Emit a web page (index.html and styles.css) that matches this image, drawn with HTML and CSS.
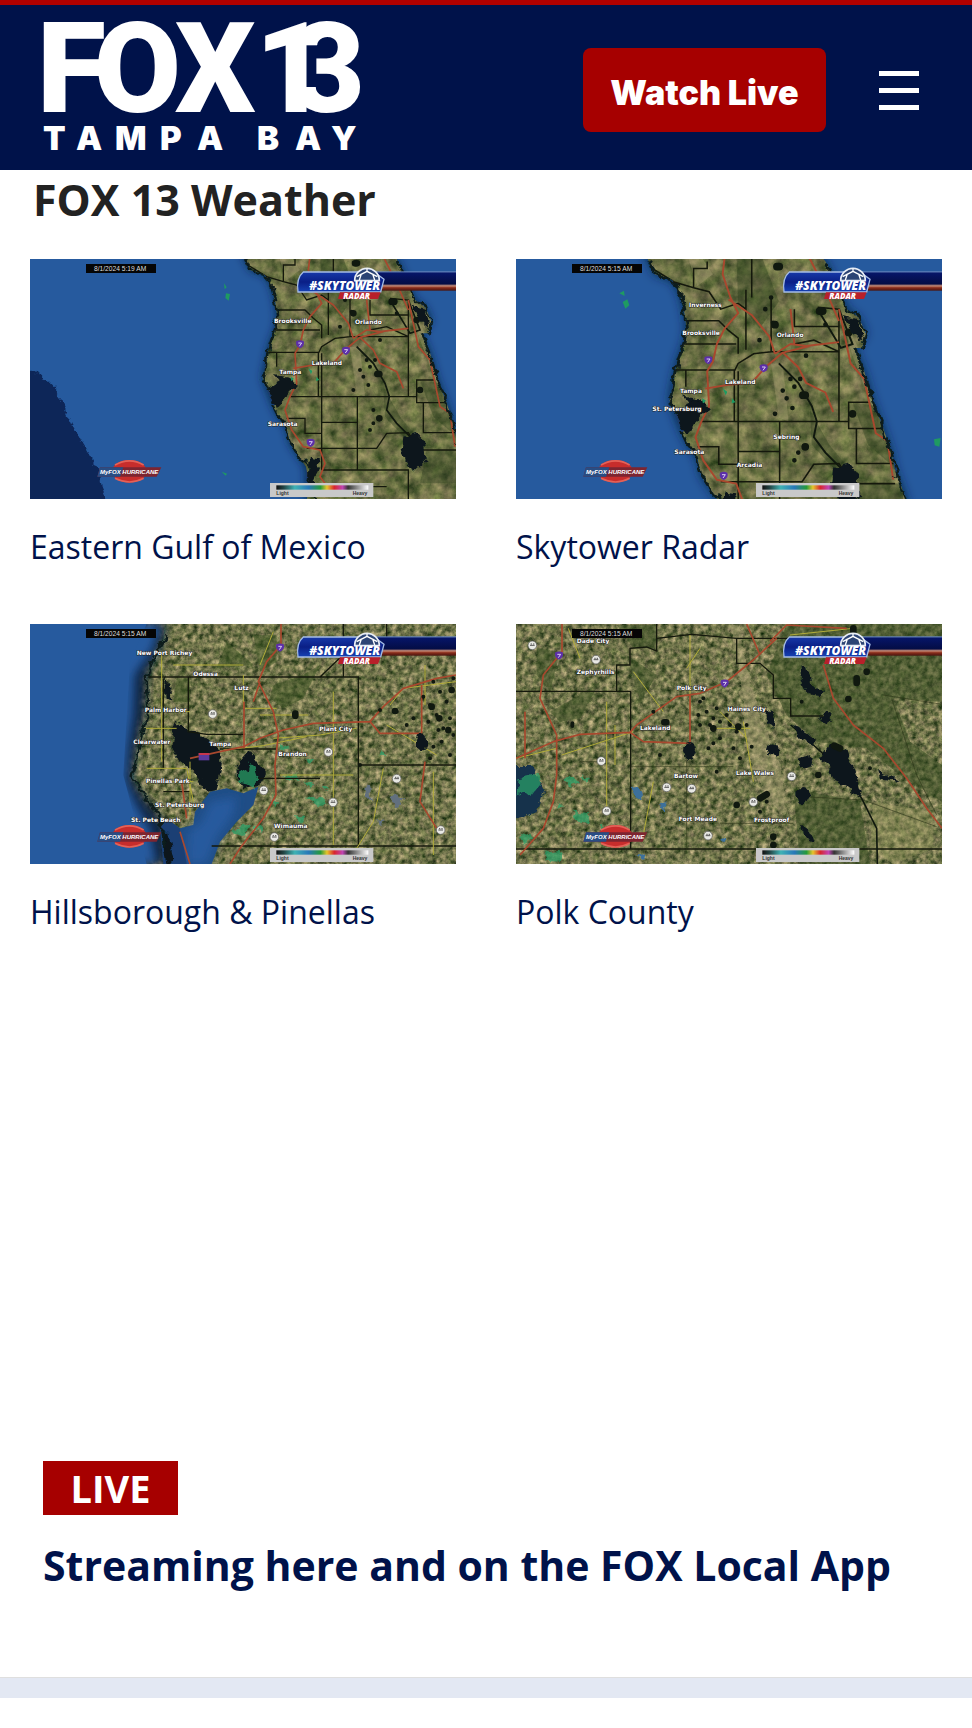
FILE: index.html
```html
<!DOCTYPE html>
<html lang="en">
<head>
  <meta charset="UTF-8" />
  <meta name="viewport" content="width=device-width, initial-scale=1.0" />
  <title>FOX 13 Tampa Bay</title>
  <link rel="stylesheet" href="styles.css">
</head>
<body>

<!-- Shared map pieces -->
<svg class="defs" width="0" height="0" aria-hidden="true">
  <defs>
    <filter id="terrain" x="0" y="0" width="100%" height="100%" color-interpolation-filters="sRGB">
      <feTurbulence type="fractalNoise" baseFrequency="0.03" numOctaves="5" seed="4" />
      <feColorMatrix values=".5 .35 0 0 -.01  .45 .2 0 0 .11  .3 .25 0 0 -.01  0 0 0 0 1" />
    </filter>
    <filter id="terrainFine" x="0" y="0" width="100%" height="100%" color-interpolation-filters="sRGB">
      <feTurbulence type="fractalNoise" baseFrequency="0.06" numOctaves="4" seed="9" />
      <feColorMatrix values=".75 .4 0 0 -.14  .65 .25 0 0 0  .5 .3 0 0 -.11  0 0 0 0 1" />
    </filter>
    <filter id="soft" x="-20%" y="-20%" width="140%" height="140%"><feGaussianBlur stdDeviation="14" /></filter>
    <filter id="rough" x="-10%" y="-10%" width="120%" height="120%">
      <feTurbulence type="fractalNoise" baseFrequency="0.04" numOctaves="3" seed="2" result="n" />
      <feDisplacementMap in="SourceGraphic" in2="n" scale="26" xChannelSelector="R" yChannelSelector="G" />
    </filter>
    <linearGradient id="banner" x1="0" y1="0" x2="0" y2="1">
      <stop offset="0" stop-color="#1739a8" /><stop offset=".5" stop-color="#0a1f86" /><stop offset="1" stop-color="#1743b4" />
    </linearGradient>
    <linearGradient id="bar" x1="0" y1="0" x2="0" y2="1">
      <stop offset="0" stop-color="#6f8fc4" /><stop offset=".1" stop-color="#061567" /><stop offset=".65" stop-color="#040d45" />
      <stop offset=".75" stop-color="#c98e78" /><stop offset=".85" stop-color="#8a2c1a" /><stop offset="1" stop-color="#481410" />
    </linearGradient>
    <linearGradient id="scale">
      <stop offset="0" stop-color="#111" /><stop offset=".08" stop-color="#244" /><stop offset=".2" stop-color="#3fb2b4" />
      <stop offset=".35" stop-color="#2878b8" /><stop offset=".48" stop-color="#259a3a" /><stop offset=".55" stop-color="#e7c52c" />
      <stop offset=".63" stop-color="#d8252c" /><stop offset=".72" stop-color="#c044b4" /><stop offset=".78" stop-color="#333" /><stop offset="1" stop-color="#fff" />
    </linearGradient>
    <clipPath id="florida">
      <path d="M660 0L675 27L690 60L735 75L755 110L765 150L772 200L765 240L750 280L740 320L738 350L728 385L745 420L765 425L775 400L792 405L785 440L760 470L775 500L800 535L810 580L840 625L858 650L866 690L860 760H1345L1338 640L1308 560L1300 520L1280 460L1250 380L1230 310L1205 250L1225 250L1235 215L1215 170L1185 150L1160 90L1130 27L1110 0Z" />
    </clipPath>

    <!-- Florida peninsula -->
    <g id="peninsula">
      <path class="shelf" d="M660 0L675 27L690 60L735 75L755 110L765 150L772 200L765 240L750 280L740 320L728 385L745 430L760 470L775 500L800 535L810 580L840 625L858 650L860 760H1345L1338 640L1308 560L1300 520L1280 460L1250 380L1230 310L1205 250L1235 215L1215 170L1185 150L1160 90L1130 27L1110 0Z" />
      <g clip-path="url(#florida)">
        <rect x="640" y="0" width="720" height="760" filter="url(#terrain)" />
        <path class="sand" d="M990 290L1020 290L1035 440L1010 430ZM770 0L800 90L840 60L800 0M1165 150L1200 270L1250 400L1270 400L1210 240Z" />
        <path class="swamp" d="M900 0H960L1010 130L960 200L905 130ZM1090 410L1140 500L1190 560L1160 570L1095 500ZM1200 390L1260 400L1310 560L1240 500ZM1220 600H1330V700H1200Z" />
        <path class="county" d="M675 40L740 80L790 95V45H825V27M790 95L830 105L860 150L905 135L925 150V255M770 180H855L880 205L905 225V265M925 100V255M990 120V260L945 265L905 290L895 310V440M760 240H900M745 307H895M770 307V350M810 440H1165M905 310V660M905 517H1012M1012 440V660M800 505H855V550H905M860 595H1070L1100 550L1165 548L1200 600H1310M905 660H1165V760M990 260H1165V150L1110 145M1165 260V440H1190V390H1245M1190 395V458H1280M1210 458V548H1310M1050 150V195H1165M880 710H1100M1165 260L1100 230L1050 240M940 0V120" />
        <path class="river" d="M1010 290L1060 340L1095 400L1108 440L1100 480L1130 520L1170 560M1165 150L1200 240L1170 250L1110 150" />
        <path class="road" d="M872 0L865 60L885 120L905 160L870 200L850 240L840 285L825 310L830 400L810 440L795 480L815 540L850 590L900 600L915 640L900 680L930 720M880 125L940 165L985 220L1000 265M820 355L880 345L940 340L975 300L1020 262L1090 245M1000 265L1040 240L1080 245L1165 235M1020 262L1060 300L1080 340L1130 365L1150 415M1165 150L1195 290L1230 330L1245 400L1260 470L1290 490L1305 590M1040 150L1050 240M1080 0L1130 100L1165 180" />
        <path class="lake-dots s12" d="M995 185h0M1080 270h0M1050 350h0M1075 370h0M1040 330h0M1045 405h0M1075 505h0M1060 480h0M990 120h0M1030 380h0M1130 190h0M1000 420h0M975 150h0M960 230h0M1020 360h0M1060 520h0M1050 540h0M1065 330h0" />
        <path class="lake-dots s20" d="M1000 190h0M1072 372h6M1200 420h0M1078 505h0M1115 155h8M1005 40h6M1190 210h0" />
        <path class="lake" d="M1150 560L1190 548L1215 575L1220 630L1185 665L1160 650L1145 600ZM1180 170L1215 180L1225 230L1190 200ZM765 375L815 385L830 410L780 450L765 430L792 405Z" />
        <path class="rain" d="M865 355l12 8-4 10zM890 380l8 10-10 3zM850 400l12 4zM812 380l10 6-8 8zM860 420l14 4z" />
      </g>
      <path class="coast" d="M675 27L690 60L735 75L755 110L765 150L772 200L765 240L750 280L740 320L738 350L728 385L745 420M760 470L775 500L800 535L810 580L840 625L870 650L866 690L890 760M1130 27L1160 90L1185 150L1215 170L1235 215L1225 250M1205 250L1230 310L1250 380L1280 460L1300 520L1308 560L1338 640L1345 760" />
      <path class="lake" d="M745 410L790 385L822 395L800 440L770 470L750 440ZM870 620L900 625L895 655L880 690L900 740L880 740L865 660Z" />
    </g>

    <!-- Station graphics, the same on each map -->
    <g id="station">
      <rect x="198" y="42" width="210" height="27" fill="#050505" />
      <rect x="1060" y="64" width="260" height="58" fill="url(#bar)" />
      <path d="M850 66H1062L1092 88L1082 126H834Q828 84 850 66Z" fill="url(#banner)" stroke="#a5bce5" stroke-width="4" />
      <path d="M1004 92A36 36 0 0 1 1078 92Z" fill="#2c4474" stroke="#e8edf5" stroke-width="5" />
      <path d="M1010 80l31-16 31 16M1041 64v-8M1024 72l-6 18M1058 72l6 18" fill="none" stroke="#fff" stroke-width="4" />
      <path d="M960 127H1082L1074 147H954Z" fill="#b8202a" />
      <text x="868" y="120" class="sky">#SKYTOWER</text>
      <text x="970" y="146" class="radar">RADAR</text>
      <ellipse cx="328" cy="664" rx="52" ry="34" fill="#c72d2c" />
      <path d="M285 645q44-25 86 0M285 685q44 22 86 0" fill="none" stroke="#e46258" stroke-width="5" />
      <path d="M240 652H424L410 680H232Z" fill="#7c2530" />
      <path d="M240 652H310L300 680H232Z" fill="#294d83" />
      <text x="240" y="671" class="hurricane">MyFOX HURRICANE</text>
      <rect x="750" y="699" width="310" height="42" fill="#c9c9c9" />
      <rect x="769" y="706" width="276" height="13" fill="url(#scale)" />
      <text x="769" y="735" class="legend">Light</text>
      <text x="998" y="735" class="legend">Heavy</text>
    </g>
    <g id="shield">
      <path d="M-11-9Q0-14 11-9Q16 6 0 13Q-16 6-11-9Z" fill="#5c2fa8" />
      <path d="M-5-3h10l-7 10" fill="none" stroke="#d9cdf2" stroke-width="3" />
    </g>
    <g id="route"><circle r="13" fill="#e9e9e4" stroke="#555" stroke-width="2" /><path d="M-7 0h14M-5-4h4M2-4h4" stroke="#555" stroke-width="3" /></g>
  </defs>
</svg>

<header class="header">
  <a class="logo" href="#" aria-label="FOX 13 Tampa Bay">
    <svg viewBox="0 0 314 131" width="314" height="131">
      <text class="logo-fox" x="-6 51 132" y="92">FOX</text>
      <text class="logo-num" x="212 249" y="92">13</text>
      <text class="logo-city" x="0 33 72 117 154 214 252 288" y="130">TAMPABAY</text>
    </svg>
  </a>
  <div class="header-right">
    <button class="watch-btn" type="button">Watch Live</button>
    <button class="menu-btn" type="button" aria-label="Menu">
      <span></span>
      <span></span>
      <span></span>
    </button>
  </div>
</header>

<main>
  <section class="weather">
    <h1>FOX 13 Weather</h1>
    <div class="map-grid">

      <a class="map-card" href="#">
        <svg class="map" viewBox="30 27 1278 720">
          <rect x="30" y="27" width="1278" height="720" fill="#265a9e" />
          <path d="M0 345L30 360L75 385L115 425L140 490L180 570L215 625L240 670L245 710L270 770H0Z" fill="#0f2658" filter="url(#rough)" />
          <use href="#peninsula" />
          <path class="rain" d="M612 100l8 12-6 6zM618 130l12 2-4 20-10-8zM605 665l16 6-4 6z" />
          <use href="#shield" x="840" y="282" />
          <use href="#shield" x="978" y="302" />
          <use href="#shield" x="872" y="578" />
          <g class="city">
            <text x="762" y="219">Brooksville</text>
            <text x="1005" y="223">Orlando</text>
            <text x="875" y="346">Lakeland</text>
            <text x="778" y="371">Tampa</text>
            <text x="743" y="527">Sarasota</text>
          </g>
          <use href="#station" />
          <text class="stamp" x="222" y="62">8/1/2024 5:19 AM</text>
        </svg>
        <span class="map-name">Eastern Gulf of Mexico</span>
      </a>

      <a class="map-card" href="#">
        <svg class="map" viewBox="48 27 1278 720">
          <rect x="48" y="27" width="1278" height="720" fill="#265a9e" />
          <use href="#peninsula" transform="translate(-338 3) scale(1.163)" />
          <path class="rain" d="M358 130l14-8 2 16zM368 156l14-8 6 18-12 10zM1302 568l20-4-4 26-14-4z" />
          <use href="#shield" x="625" y="330" />
          <use href="#shield" x="791" y="354" />
          <use href="#shield" x="671" y="677" />
          <g class="city">
            <text x="567" y="172">Inverness</text>
            <text x="547" y="256">Brooksville</text>
            <text x="830" y="261">Orlando</text>
            <text x="675" y="403">Lakeland</text>
            <text x="540" y="428">Tampa</text>
            <text x="457" y="482">St. Petersburg</text>
            <text x="820" y="566">Sebring</text>
            <text x="523" y="613">Sarasota</text>
            <text x="710" y="650">Arcadia</text>
          </g>
          <use href="#station" x="18" />
          <text class="stamp" x="240" y="62">8/1/2024 5:15 AM</text>
        </svg>
        <span class="map-name">Skytower Radar</span>
      </a>

      <a class="map-card" href="#">
        <svg class="map" viewBox="30 27 1278 720">
          <rect x="30" y="27" width="1278" height="720" filter="url(#terrainFine)" />
          <path d="M700 60H770V140L720 170ZM760 210L850 180L900 150L850 250L790 280L750 250ZM470 190H510V260H460ZM620 80L700 150L590 160Z" fill="#38501f" opacity=".5" />
          <path class="rain light" d="M790 480l40-4 10 14-30 8zM850 500l30 6-10 14zM860 545l40 0 24 24-30 4zM640 650l30-20 20 10-24 20zM700 640l20-8 10 20zM820 600l40 6-14 20zM900 510l30 6-14 14zM780 385l30 14-24 6zM1080 400l20 20-24 4zM860 430l20 10-16 8zM760 540l20 20-16 10z" />
          <!-- Gulf and bays -->
          <path class="shelf" d="M30 27H440L420 100L380 180L375 290L350 400L335 490L375 550L430 620L440 720L450 747H30Z" />
          <path d="M30 27H420L400 100L345 180L340 300L325 400L318 500L350 570L390 640L410 747H30Z" fill="#265a9e" filter="url(#soft)" />
          <path d="M30 27H380L330 140L310 480L380 747H30Z" fill="#265a9e" />
          <path d="M490 747L480 640L520 630L525 590L570 530L620 520L670 535L715 515L700 570L650 620L600 680L575 747Z" fill="#1f4d86" />
          <path d="M500 747L505 650L545 620L570 560L650 545L640 600L590 670L560 747Z" fill="#265a9e" filter="url(#soft)" />
          <path d="M430 747L420 640L440 610L480 640L500 747Z" fill="#1b3f74" />
          <path class="lake" d="M465 320L500 345L540 350L570 385L600 410L605 440L600 480L590 525L560 530L530 480L470 430L455 390ZM650 450L690 405L715 440L735 470L720 510L670 520L650 490ZM435 180L450 210L455 260L440 250ZM445 650L460 740L440 747L425 650Z" />
          <path class="rain light" d="M655 475l50-20 10 30-8 35-28-15-25-5zM690 440l14 20-20 4z" />
          <path class="county" d="M385 186H1015V690M505 186V350L560 358H675M575 693H1308M600 402H770M715 490H900M430 460V190M970 186V27M1015 450H1308M900 186L1000 90M1100 27V80M430 530H510" />
          <path class="local" d="M425 110V440M460 150H670M440 290H510M510 440V600M940 230V690M865 300H720M760 370L900 360L1010 340M610 405L730 392L860 365M1110 270L1150 220L1308 200M1090 460L1060 620L1010 700M380 460H500L520 560M720 150L760 50M1215 150V270M1240 470V720M370 340H470M380 500H520M675 280H770M780 480H1000M670 180V280M1100 330L1250 420" />
          <path class="road" d="M783 27V90L740 140L715 200L760 290L775 360L765 450L768 540L730 610L660 700L630 747M480 650L510 747M510 430L600 410L670 395L720 370L790 345L880 325L1050 320L1090 275L1150 220L1250 190L1308 180M672 260V400M1050 320L1080 355L1205 355V210M485 500L500 610M720 200L700 260M1215 440L1200 560L1250 640" />
          <path class="lake-dots s12" d="M825 295h0M1240 200h0M1260 230h0M1230 270h0M1280 260h0M1250 300h0M1290 310h0M1225 320h0M1270 340h0M1300 360h0M1130 290h0M1160 330h0M1240 395h0M1290 420h0M1265 380h0M1180 310h0M1255 345h0M1210 245h0M1080 285h0M1300 190h0M1020 450h0M1230 430h0" />
          <path class="lake-dots s20" d="M1125 288h0M1235 275h0M1258 310h0M1285 345h0M826 296v6M1295 225h0" />
          <ellipse class="lake" cx="1203" cy="382" rx="19" ry="24" />
          <path d="M1030 520l20-10 5 50-20-20zM1110 540l40 10-20 30zM1070 620l24-4-10 14z" fill="#62707e" filter="url(#rough)" />
          <path class="coast" d="M440 60L400 130L380 190L385 290L360 400L338 480L370 540L420 600L435 700" />
          <use href="#route" x="578" y="297" />
          <use href="#route" x="925" y="411" />
          <use href="#route" x="939" y="562" />
          <use href="#route" x="731" y="526" />
          <use href="#route" x="763" y="666" />
          <use href="#route" x="1130" y="491" />
          <use href="#route" x="1262" y="645" />
          <use href="#shield" x="780" y="97" />
          <path d="M536 414h32v22h-32z" fill="#5b3a9c" /><path d="M536 414h32v6h-32z" fill="#c7364c" />
          <g class="city">
            <text x="350" y="119">New Port Richey</text>
            <text x="520" y="183">Odessa</text>
            <text x="643" y="226">Lutz</text>
            <text x="374" y="291">Palm Harbor</text>
            <text x="898" y="349">Plant City</text>
            <text x="340" y="387">Clearwater</text>
            <text x="568" y="394">Tampa</text>
            <text x="775" y="422">Brandon</text>
            <text x="378" y="505">Pinellas Park</text>
            <text x="405" y="575">St. Petersburg</text>
            <text x="333" y="620">St. Pete Beach</text>
            <text x="762" y="640">Wimauma</text>
          </g>
          <use href="#station" />
          <text class="stamp" x="222" y="62">8/1/2024 5:15 AM</text>
        </svg>
        <span class="map-name">Hillsborough &amp; Pinellas</span>
      </a>

      <a class="map-card" href="#">
        <svg class="map" viewBox="48 27 1278 720">
          <rect x="48" y="27" width="1278" height="720" filter="url(#terrainFine)" />
          <path d="M860 27H1326V260L1180 250L1230 380L1326 450V560L1200 480L1100 400L950 380L860 300L800 180ZM350 30H470V100H400ZM150 290L240 240L300 200L240 310L180 320ZM880 520L1080 560L1110 747H900ZM110 100L180 110L150 230L110 180ZM380 120L470 180L420 260Z" fill="#33491f" opacity=".5" />
          <path d="M690 27L720 200L740 400L800 560L860 600L850 480L780 300L740 150L720 27Z" fill="#b5aa7e" opacity=".4" filter="url(#rough)" />
          <path d="M1120 560L1300 590V700L1180 747L1110 700Z" fill="#9c9a62" opacity=".4" />
          <path class="rain light" d="M190 490l30-6 20 20-30 10zM250 480l20 10-14 10zM220 590l50 4-10 30-30-10zM170 560l20 20-16 4zM130 710l60-6-10 34-40-4zM60 660l40 10-30 20zM300 630l20 14-20 6z" />
          <path d="M30 450L90 450L130 520L110 590L30 620Z" fill="#12304b" filter="url(#rough)" />
          <path class="rain light" d="M56 490l60-14 4 30-30 38-16-14-24 8z" />
          <path class="county" d="M48 229H392V702M48 702H1326M350 229V150H390V100L440 96L470 108V27M470 70L575 58L710 70H870L960 95M710 70V145H780L820 180V250H872V303H970" />
          <path class="trail" d="M392 455H700M240 440H310M560 400V700M660 625H880M1150 240L1326 268M1175 250L1250 480L1310 600M910 545L1090 555L1310 635M580 300L700 310" />
          <path class="river" d="M872 330L940 390L1030 470L1085 550L1130 640L1132 747" />
          <path class="local" d="M320 260V600M570 60V300M600 100L560 160M185 420L400 350M48 430L170 400M460 500L430 660M345 330V450M730 320L760 500M640 340H750M660 290L740 370M205 40L240 130M400 170L490 290M870 60L1060 40" />
          <path class="road" d="M186 27V110L130 180L120 250L170 360V480L160 560L130 640L60 720M75 290V430M48 430L160 380L240 358L390 352L410 330L480 280L530 245L600 235L680 200L760 135L830 70M390 352L430 380L570 385V240M780 120L740 27M970 150L1000 250L1060 330L1150 400L1220 490L1280 580L1326 640M810 80L860 30L1040 40" />
          <g class="lake">
            <path d="M905 150L925 160L935 210L975 230L965 250L930 245L905 200ZM800 280L825 310L820 340L800 320ZM870 330L910 345L945 370L940 390L900 370ZM960 430L990 385L1040 410L1060 460L1085 530L1080 550L1040 515L995 490L985 450ZM1135 470L1210 500L1140 490ZM900 630L945 665L940 680L905 660ZM890 530Q910 505 932 535Q930 570 900 568Q885 560 890 530ZM980 290l18 25-20 12-25-15z" />
            <ellipse cx="567" cy="408" rx="18" ry="24" />
            <ellipse cx="818" cy="405" rx="20" ry="17" />
            <ellipse cx="916" cy="442" rx="20" ry="21" />
          </g>
          <path class="lake-dots s12" d="M217 325v8M600 260h0M620 290h0M640 310h0M595 300h0M650 280h0M680 300h0M690 330h0M640 345h0M660 370h0M625 400h0M610 250h0M700 400h0M630 330h0M710 350h0M640 385h0M720 430h0M650 470h0M755 395h0M905 260h0M1110 460h0M695 280h0M740 330h0M460 290h0M780 590h0M800 560h0M480 420h0M660 320h0M600 330h0" />
          <path class="lake-dots s20" d="M493 322h6M715 335h0M780 550l20-12M1045 252h0M1070 190v14M1100 170h0M955 480h0M820 665h0M710 570h0M820 690h0M1060 40v10M640 340h0M1020 400l-18-8" />
          <path d="M395 520l20-5 10 40-20-10zM480 575l20-10-6 26zM410 720l30-8-10 24zM660 675l22-8-6 20z" fill="#3c6f9a" filter="url(#rough)" />
          <use href="#route" x="97" y="91" />
          <use href="#route" x="288" y="134" />
          <use href="#route" x="304" y="438" />
          <use href="#route" x="320" y="588" />
          <use href="#route" x="575" y="521" />
          <use href="#route" x="500" y="517" />
          <use href="#route" x="875" y="484" />
          <use href="#route" x="760" y="561" />
          <use href="#route" x="624" y="662" />
          <use href="#shield" x="177" y="121" />
          <use href="#shield" x="674" y="205" />
          <g class="city">
            <text x="230" y="84">Dade City</text>
            <text x="230" y="176">Zephyrhills</text>
            <text x="530" y="225">Polk City</text>
            <text x="683" y="287">Haines City</text>
            <text x="420" y="345">Lakeland</text>
            <text x="522" y="489">Bartow</text>
            <text x="708" y="481">Lake Wales</text>
            <text x="536" y="617">Fort Meade</text>
            <text x="762" y="621">Frostproof</text>
          </g>
          <use href="#station" x="18" />
          <text class="stamp" x="240" y="62">8/1/2024 5:15 AM</text>
        </svg>
        <span class="map-name">Polk County</span>
      </a>

    </div>
  </section>

  <section class="live">
    <span class="live-tag">LIVE</span>
    <h2><a href="#">Streaming here and on the FOX Local App</a></h2>
  </section>

  <div class="divider"></div>
</main>

</body>
</html>
```

FILE: styles.css
```css
* { margin: 0; padding: 0; box-sizing: border-box; }
body {
  background: #fff;
  font-family: "Open Sans", Arial, sans-serif;
  color: #222;
}

a { color: #00124a; text-decoration: none; }
.defs { position: absolute; }

.header {
  display: flex;
  justify-content: space-between;
  align-items: flex-start;
  height: 170px;
  padding: 15px 53px 0 43px;
  background: #00124a;
  border-top: 5px solid #b00000;
}

.logo svg { display: block; overflow: visible; fill: #fff; }
.logo-fox, .logo-num { font-family: Roboto, sans-serif; font-weight: 900; font-size: 126px; }
.logo-city { font-family: Inter, sans-serif; font-weight: 900; font-size: 33px; }

.header-right {
  display: flex;
  align-items: center;
  gap: 53px;
  height: 140px;
}

.watch-btn {
  width: 243px;
  height: 84px;
  padding-top: 5px;
  background: #a60000;
  color: #fff;
  border: none;
  border-radius: 8px;
  font-family: Inter, sans-serif;
  font-size: 34px;
  font-weight: 900;
  cursor: pointer;
}

.menu-btn {
  display: flex;
  flex-direction: column;
  gap: 12px;
  width: 40px;
  background: none;
  border: none;
  cursor: pointer;
}

.menu-btn span {
  height: 5px;
  background: #fff;
}

.weather { padding: 0 30px; min-height: 1291px; }

.weather h1 {
  padding: 0 3px;
  font-size: 43px;
  line-height: 60px;
  font-weight: 700;
}

.map-grid {
  display: grid;
  grid-template-columns: 1fr 1fr;
  gap: 57px 60px;
  margin-top: 29px;
}

.map-card { display: block; }
.map { display: block; width: 100%; }
.map-name {
  display: block;
  margin-top: 28px;
  font-size: 32px;
  line-height: 40px;
}

/* map drawing */
.shelf { fill: #0b2340; filter: url(#soft); }
.sand { fill: #b3a67a; opacity: .35; }
.swamp { fill: #26391a; opacity: .35; }
.county { fill: none; stroke: #14180c; stroke-width: 4; }
.trail { fill: none; stroke: #2c3418; stroke-width: 3; opacity: .6; }
.river { fill: none; stroke: #10180e; stroke-width: 5; }
.road { fill: none; stroke: #a8482e; stroke-width: 5; stroke-linejoin: round; }
.local { fill: none; stroke: #b3ad3a; stroke-width: 3; }
.coast { fill: none; stroke: #0a1c1c; stroke-width: 7; stroke-linejoin: round; filter: url(#rough); }
.lake { fill: #0b191c; filter: url(#rough); }
.lake-dots { stroke: #10180f; stroke-linecap: round; }
.s12 { stroke-width: 12; }
.s20 { stroke-width: 20; }
.rain { fill: #1f9a62; }
.light { fill: #2ba36b; opacity: .7; filter: url(#rough); }

.city {
  fill: #fff;
  stroke: #222;
  stroke-width: 3;
  paint-order: stroke;
  font-family: "DejaVu Sans", sans-serif;
  font-weight: 700;
  font-size: 18px;
}
.stamp { fill: #ddd; font-family: "Liberation Sans", Arial, sans-serif; font-size: 20px; }
.sky { fill: #fff; font-family: "Open Sans", sans-serif; font-style: italic; font-weight: 800; font-size: 36px; }
.radar { fill: #fff; font-family: "Open Sans", sans-serif; font-style: italic; font-weight: 800; font-size: 24px; }
.hurricane { fill: #fff; font-family: "Liberation Sans", Arial, sans-serif; font-style: italic; font-weight: 700; font-size: 18px; }
.legend { fill: #333; font-family: "Liberation Sans", Arial, sans-serif; font-weight: 700; font-size: 15px; }

.live { padding: 0 43px; min-height: 216px; }

.live-tag {
  display: block;
  width: 135px;
  background: #a60000;
  color: #fff;
  font-size: 38px;
  line-height: 54px;
  font-weight: 700;
  text-align: center;
}

.live h2 {
  margin-top: 20px;
  font-size: 41px;
  line-height: 60px;
  font-weight: 700;
}

.divider {
  height: 21px;
  background: #e3e8f3;
  border-top: 1px solid #dfdfdf;
}
```
